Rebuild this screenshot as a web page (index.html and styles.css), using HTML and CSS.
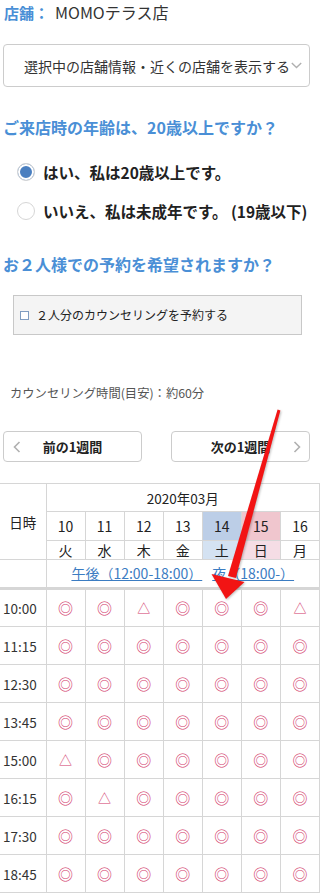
FILE: index.html
```html
<!DOCTYPE html>
<html lang="ja">
<head>
<meta charset="utf-8">
<title>予約</title>
<link rel="stylesheet" href="styles.css">
</head>
<body>
<div class="page">
  <p class="store"><span class="store-label">店舗：</span><span class="store-name">MOMOテラス店</span></p>

  <div class="select">
    <span class="select-text">選択中の店舗情報・近くの店舗を表示する</span>
    <svg class="select-chevron" width="11" height="7" viewBox="0 0 11 7"><polyline points="0.8,1 5.5,5.6 10.2,1" fill="none" stroke="#b0b0b0" stroke-width="1.4"/></svg>
  </div>

  <h2 class="question q1">ご来店時の年齢は、20歳以上ですか？</h2>
  <ul class="radios">
    <li class="radio-row"><span class="radio checked"></span><span class="radio-label">はい、私は20歳以上です。</span></li>
    <li class="radio-row"><span class="radio"></span><span class="radio-label">いいえ、私は未成年です。 (19歳以下)</span></li>
  </ul>

  <h2 class="question q2">お２人様での予約を希望されますか？</h2>
  <div class="pair-box"><span class="checkbox"></span><span class="pair-label">２人分のカウンセリングを予約する</span></div>

  <p class="duration">カウンセリング時間(目安)：約60分</p>

  <div class="week-nav">
    <div class="week-btn">
      <svg class="chev" width="8" height="12" viewBox="0 0 8 12"><polyline points="6.5,1 1.5,6 6.5,11" fill="none" stroke="#b0b0b0" stroke-width="1.6"/></svg>
      <span class="week-text">前の1週間</span>
      <span></span>
    </div>
    <div class="week-btn">
      <span></span>
      <span class="week-text">次の1週間</span>
      <svg class="chev" width="8" height="12" viewBox="0 0 8 12"><polyline points="1.5,1 6.5,6 1.5,11" fill="none" stroke="#b0b0b0" stroke-width="1.6"/></svg>
    </div>
  </div>

  <table class="cal">
    <colgroup>
      <col class="c-time">
      <col><col><col><col><col><col><col>
    </colgroup>
    <thead>
      <tr class="r-month">
        <th class="hd-time" rowspan="3">日時</th>
        <th colspan="7">2020年03月</th>
      </tr>
      <tr class="r-date">
        <th>10</th><th>11</th><th>12</th><th>13</th><th class="sat">14</th><th class="sun">15</th><th>16</th>
      </tr>
      <tr class="r-wday">
        <th>火</th><th>水</th><th>木</th><th>金</th><th class="sat-l">土</th><th class="sun-l">日</th><th>月</th>
      </tr>
      <tr class="r-links">
        <td class="first"></td>
        <td colspan="7"><a class="tlink">午後（12:00-18:00）</a><a class="tlink">夜（18:00-）</a></td>
      </tr>
    </thead>
    <tbody>
      <tr class="row top"><td class="time">10:00</td><td class="ok">◎</td><td class="ok">◎</td><td class="few">△</td><td class="ok">◎</td><td class="ok">◎</td><td class="ok">◎</td><td class="few">△</td></tr>
      <tr class="row"><td class="time">11:15</td><td class="ok">◎</td><td class="ok">◎</td><td class="ok">◎</td><td class="ok">◎</td><td class="ok">◎</td><td class="ok">◎</td><td class="ok">◎</td></tr>
      <tr class="row"><td class="time">12:30</td><td class="ok">◎</td><td class="ok">◎</td><td class="ok">◎</td><td class="ok">◎</td><td class="ok">◎</td><td class="ok">◎</td><td class="ok">◎</td></tr>
      <tr class="row"><td class="time">13:45</td><td class="ok">◎</td><td class="ok">◎</td><td class="ok">◎</td><td class="ok">◎</td><td class="ok">◎</td><td class="ok">◎</td><td class="ok">◎</td></tr>
      <tr class="row"><td class="time">15:00</td><td class="few">△</td><td class="ok">◎</td><td class="ok">◎</td><td class="ok">◎</td><td class="ok">◎</td><td class="ok">◎</td><td class="ok">◎</td></tr>
      <tr class="row"><td class="time">16:15</td><td class="ok">◎</td><td class="few">△</td><td class="ok">◎</td><td class="ok">◎</td><td class="ok">◎</td><td class="ok">◎</td><td class="ok">◎</td></tr>
      <tr class="row"><td class="time">17:30</td><td class="ok">◎</td><td class="ok">◎</td><td class="ok">◎</td><td class="ok">◎</td><td class="ok">◎</td><td class="ok">◎</td><td class="ok">◎</td></tr>
      <tr class="row"><td class="time">18:45</td><td class="ok">◎</td><td class="ok">◎</td><td class="ok">◎</td><td class="ok">◎</td><td class="ok">◎</td><td class="ok">◎</td><td class="ok">◎</td></tr>
    </tbody>
  </table>
</div>

<svg class="arrow" width="320" height="895" viewBox="0 0 320 895">
  <polygon points="277.6,409.6 280.4,410.4 235.8,578.1 228.0,575.9" fill="#f21414"/>
  <polygon points="211.5,574 244.5,582 226,599" fill="#f21414"/>
</svg>
</body>
</html>
```

FILE: styles.css
```css
* {
  box-sizing: border-box;
  margin: 0;
  padding: 0;
}

html, body {
  background: #fff;
}

body {
  width: 320px;
  height: 895px;
  overflow: hidden;
  position: relative;
  font-family: "Noto Sans CJK JP", "Noto Sans", sans-serif;
  color: #333;
}

.store {
  font-size: 15px;
  line-height: 24px;
  padding-left: 4px;
  color: #333;
  white-space: nowrap;
}

.store-label {
  color: #4a8fd6;
  font-weight: bold;
}

.store-name {
  margin-left: 6px;
  font-size: 16px;
}

.select {
  margin: 19px 0 0 3px;
  width: 307px;
  height: 43px;
  border: 1px solid #cccccc;
  border-radius: 4px;
  display: flex;
  align-items: center;
  padding-left: 20px;
}

.select-text {
  font-size: 14px;
  line-height: 20px;
  color: #333;
  white-space: nowrap;
}

.select-chevron {
  margin-left: 1px;
  flex: none;
}

.question {
  font-size: 16px;
  font-weight: bold;
  line-height: 24px;
  color: #4a8fd6;
  padding-left: 3px;
  white-space: nowrap;
}

.q1 {
  margin-top: 28px;
}

.q2 {
  margin-top: 22px;
}

.radios {
  list-style: none;
  margin-top: 13px;
}

.radio-row {
  height: 39px;
  display: flex;
  align-items: center;
  padding-left: 17px;
  white-space: nowrap;
}

.radio {
  flex: none;
  width: 18px;
  height: 18px;
  border-radius: 50%;
  border: 1px solid #d6d6d6;
  background: #fff;
}

.radio.checked {
  background: #4a7fc0;
  box-shadow: inset 0 0 0 2px #fff;
}

.radio-label {
  margin-left: 8px;
  font-size: 15.5px;
  font-weight: bold;
  color: #222;
  line-height: 20px;
}

.pair-box {
  margin: 19px 0 0 13px;
  width: 289px;
  height: 40px;
  border: 1.5px solid #c8c8c8;
  background: #f4f4f4;
  display: flex;
  align-items: center;
  padding-left: 6px;
}

.checkbox {
  flex: none;
  width: 9px;
  height: 9px;
  border: 1px solid #7f9cc0;
  background: #fff;
}

.pair-label {
  margin-left: 7px;
  font-size: 12px;
  line-height: 18px;
  color: #222;
}

.duration {
  margin-top: 49px;
  padding-left: 10px;
  font-size: 12.3px;
  line-height: 18px;
  color: #555;
}

.week-nav {
  margin-top: 29px;
  display: flex;
  justify-content: space-between;
  padding: 0 10px 0 3px;
}

.week-btn {
  width: 139px;
  height: 31px;
  border: 1px solid #cccccc;
  border-radius: 4px;
  display: grid;
  grid-template-columns: 25px 1fr 25px;
  align-items: center;
  justify-items: center;
}

.week-text {
  font-size: 13px;
  font-weight: bold;
  color: #222;
  line-height: 18px;
}

.cal {
  margin-top: 21px;
  width: 320px;
  border-collapse: collapse;
  table-layout: fixed;
  font-size: 13px;
  color: #222;
}

.c-time {
  width: 46px;
}

.cal th,
.cal td {
  border: 1px solid #d6d6d6;
  text-align: center;
  font-weight: normal;
  padding: 0;
  line-height: 18px;
}

.cal tr > :first-child {
  border-left: none;
}

.r-month th {
  height: 28px;
  font-size: 13.5px;
}

.r-date th {
  height: 29px;
  font-size: 14px;
}

.r-wday th {
  height: 18px;
  font-size: 14px;
}

.r-links td {
  height: 29px;
}

.sat { background: #bccee7; }
.sun { background: #f0c6ce; }
.sat-l { background: #d4e2f2; }
.sun-l { background: #f5dde5; }

.tlink {
  color: #3b7cc2;
  text-decoration: underline;
  font-size: 14px;
  margin: 0 5px;
  white-space: nowrap;
}

.row td {
  height: 38px;
}

.row.top td {
  border-top: 3px solid #d6d6d6;
}

.cal .time {
  text-align: left;
  padding-left: 3px;
  color: #333;
  font-size: 13.5px;
}

.ok {
  color: #d2386a;
  font-size: 15px;
}

.few {
  color: #d2386a;
  font-size: 13px;
}

.arrow {
  position: absolute;
  left: 0;
  top: 0;
  pointer-events: none;
  filter: drop-shadow(1px 1px 1px rgba(0, 0, 0, 0.25));
}
```
